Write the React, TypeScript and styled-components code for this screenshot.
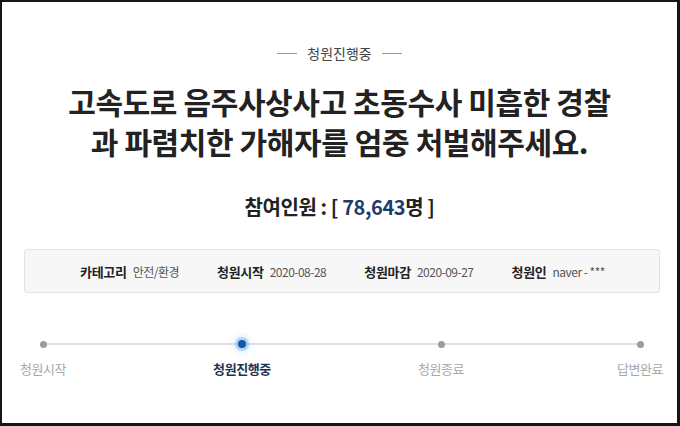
import React from 'react';
import styled, { createGlobalStyle } from 'styled-components';

const GlobalStyle = createGlobalStyle`
  html, body {
    margin: 0;
    padding: 0;
    background: #ffffff;
  }
  body {
    font-family: "Noto Sans CJK KR", "Noto Sans", sans-serif;
  }
`;

const Frame = styled.div`
  box-sizing: border-box;
  width: 680px;
  height: 426px;
  border-style: solid;
  border-color: #161616;
  border-width: 2px 3px 3px 2px;
  background: #ffffff;
  display: flex;
  flex-direction: column;
  align-items: center;
  padding-top: 41px;
`;

const Status = styled.div`
  display: flex;
  align-items: center;
  gap: 10px;
  font-size: 14px;
  line-height: 20px;
  color: #444;
  &::before, &::after {
    content: '';
    width: 20px;
    height: 1px;
    background: #9a9a9a;
  }
`;

const Title = styled.h1`
  margin: 18px 0 0;
  font-size: 30px;
  line-height: 40px;
  font-weight: 700;
  color: #222;
  text-align: center;
  letter-spacing: -0.4px;
`;

const Count = styled.div`
  margin-top: 32px;
  font-size: 20px;
  line-height: 28px;
  font-weight: 700;
  color: #222;
  letter-spacing: -0.4px;
`;

const Number = styled.span`
  color: #1c3c70;
`;

const InfoBox = styled.div`
  box-sizing: border-box;
  align-self: stretch;
  margin: 28px 17px 0 22px;
  height: 44px;
  background: #f7f7f7;
  border: 1px solid #e3e3e3;
  border-radius: 3px;
  display: flex;
  align-items: center;
  padding-left: 55px;
  gap: 38px;
`;

const InfoItem = styled.div`
  display: flex;
  align-items: baseline;
  gap: 6px;
`;

const InfoLabel = styled.span`
  font-size: 13px;
  font-weight: 700;
  color: #222;
  letter-spacing: -0.3px;
`;

const InfoValue = styled.span`
  font-size: 12px;
  color: #555;
  letter-spacing: -0.5px;
`;

const Steps = styled.div`
  position: relative;
  align-self: stretch;
  margin: 45px 14px 0 18px;
  display: flex;
  justify-content: space-between;
  &::before {
    content: '';
    position: absolute;
    top: 5px;
    left: 23px;
    right: 23px;
    height: 2px;
    background: #e0e0e0;
  }
`;

const Step = styled.div`
  position: relative;
  width: 46px;
  display: flex;
  flex-direction: column;
  align-items: center;
`;

const DotSlot = styled.div`
  height: 12px;
  display: flex;
  align-items: center;
  justify-content: center;
`;

const Dot = styled.span<{ $active?: boolean }>`
  width: ${(p) => (p.$active ? 8 : 7)}px;
  height: ${(p) => (p.$active ? 8 : 7)}px;
  border-radius: 50%;
  background: ${(p) => (p.$active ? '#1756a8' : '#9c9c9c')};
  box-shadow: ${(p) => (p.$active ? '0 0 0 3px rgba(120, 180, 240, 0.45), 0 0 6px 4px rgba(150, 200, 250, 0.35)' : 'none')};
`;

const StepLabel = styled.span<{ $active?: boolean }>`
  margin-top: 10px;
  white-space: nowrap;
  font-size: 13px;
  line-height: 18px;
  letter-spacing: -0.4px;
  font-weight: ${(p) => (p.$active ? 700 : 400)};
  color: ${(p) => (p.$active ? '#22324f' : '#a8a8a8')};
`;

const info = [
  { label: '카테고리', value: '안전/환경' },
  { label: '청원시작', value: '2020-08-28' },
  { label: '청원마감', value: '2020-09-27' },
  { label: '청원인', value: 'naver - ***' },
];

const steps = ['청원시작', '청원진행중', '청원종료', '답변완료'];

const App = () => (
  <>
    <GlobalStyle />
    <Frame>
      <Status>청원진행중</Status>
      <Title>
        고속도로 음주사상사고 초동수사 미흡한 경찰
        <br />
        과 파렴치한 가해자를 엄중 처벌해주세요.
      </Title>
      <Count>
        참여인원 : [ <Number>78,643</Number>명 ]
      </Count>
      <InfoBox>
        {info.map((item) => (
          <InfoItem key={item.label}>
            <InfoLabel>{item.label}</InfoLabel>
            <InfoValue>{item.value}</InfoValue>
          </InfoItem>
        ))}
      </InfoBox>
      <Steps>
        {steps.map((s, i) => (
          <Step key={s}>
            <DotSlot>
              <Dot $active={i === 1} />
            </DotSlot>
            <StepLabel $active={i === 1}>{s}</StepLabel>
          </Step>
        ))}
      </Steps>
    </Frame>
  </>
);

export default App;
